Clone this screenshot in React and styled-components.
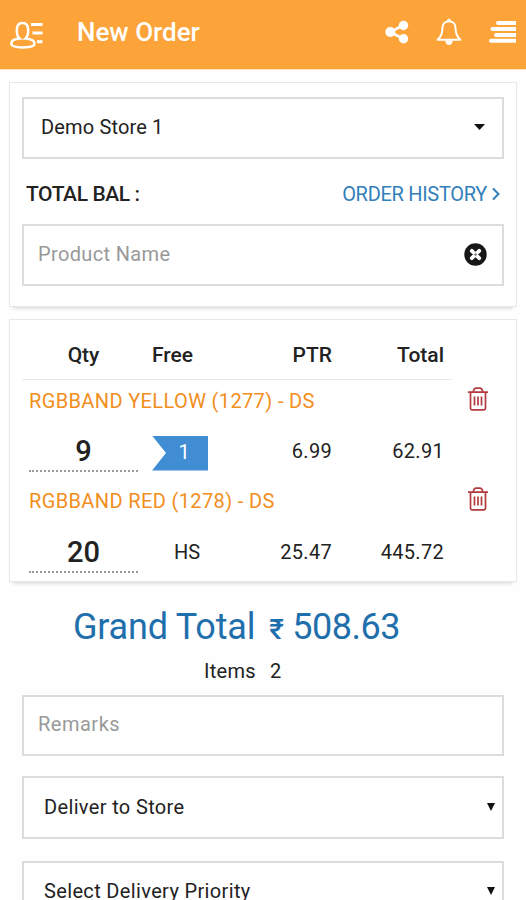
import React from 'react'
import styled, { createGlobalStyle } from 'styled-components'

const GlobalStyle = createGlobalStyle`
  * {
    box-sizing: border-box;
  }

  body {
    margin: 0;
    background: #fefefe;
    color: #222;
    font-family: Roboto, 'Noto Sans', sans-serif;
    font-size: 20px;
  }
`

const Screen = styled.div`
  width: 526px;
  height: 900px;
  overflow: hidden;
`

const Header = styled.header`
  display: flex;
  align-items: center;
  height: 69px;
  padding: 0 10px;
  background: #fca339;
  color: #fff;
  box-shadow: 0 1px 1px #fbe3bd;

  svg {
    display: block;
    flex: none;
  }
`

const Title = styled.h1`
  flex: 1;
  margin: 0 0 5px 34px;
  font-size: 26px;
  line-height: 32px;
  font-weight: 500;
`

const HeaderActions = styled.div`
  display: flex;
  align-items: center;
  gap: 27px;
  margin-bottom: 6px;
`

const Card = styled.section`
  height: ${p => p.$height}px;
  margin: ${p => p.$top}px 9px 0;
  padding: ${p => p.$padding};
  border: 1px solid #e8e8e8;
  background: #fff;
  box-shadow: 0 5px 4px -4px #d2d2d2;
`

const Field = styled.div`
  display: flex;
  align-items: center;
  justify-content: space-between;
  height: ${p => p.$height || 62}px;
  margin-top: ${p => p.$top || 0}px;
  padding: ${p => p.$padding};
  border: 2px solid #dcdcdc;
  background: #fff;
  color: ${p => (p.$placeholder ? '#999' : '#222')};
  letter-spacing: ${p => p.$spacing || 0.35}px;
  line-height: 24px;

  svg {
    display: block;
  }
`

const BalanceRow = styled.div`
  display: flex;
  align-items: center;
  justify-content: space-between;
  height: 65px;
  padding: 4px 4px 0 4px;
`

const Balance = styled.strong`
  font-size: 21px;
  font-weight: 500;
  letter-spacing: -0.4px;
`

const HistoryLink = styled.a`
  display: flex;
  align-items: center;
  gap: 5px;
  color: #337fba;
  letter-spacing: -0.3px;
`

const Row = styled.div`
  display: grid;
  grid-template-columns: 123px 70px 117px 112px;
  align-items: center;
  height: ${p => p.$height}px;
`

const HeadRow = styled(Row)`
  width: 430px;
  border-bottom: 1px solid #e9e9e9;
  font-size: 21px;
  font-weight: 500;
  line-height: 24px;
`

const Cell = styled.span`
  padding-left: ${p => p.$indent || 0}px;
  text-align: ${p => p.$align || 'right'};
  letter-spacing: ${p => p.$spacing || 0}px;
`

const ProductLine = styled.div`
  display: flex;
  align-items: center;
  justify-content: space-between;
  height: 42px;
  padding: 0 16px 0 7px;

  svg {
    margin-bottom: 4px;
  }
`

const ProductName = styled.span`
  color: #f18e1c;
  letter-spacing: 0.37px;
  line-height: 24px;
`

const Qty = styled.div`
  width: 109px;
  height: 42px;
  margin: 0 0 0 7px;
  border-bottom: 2px dotted #999;
  font-size: 29px;
  line-height: 43px;
  font-weight: 500;
  text-align: center;
`

const FreeBadge = styled.span`
  display: block;
  width: 56px;
  height: 35px;
  margin: 4px 0 0 7px;
  padding-left: 8px;
  background: #408dd3;
  clip-path: polygon(0 0, 100% 0, 100% 100%, 0 100%, 25% 50%);
  color: #fff;
  line-height: 33px;
  text-align: center;
`

const GrandTotal = styled.div`
  display: flex;
  align-items: baseline;
  height: 42px;
  margin: 24px 0 0 73px;
  color: #1f6fad;
  font-size: 36px;
  line-height: 42px;
  letter-spacing: -0.2px;
`

const Rupee = styled.span`
  width: 23px;
  margin-left: 14px;
  font-size: 28px;
  font-weight: 500;
`

const Amount = styled.span`
  letter-spacing: -0.5px;
`

const Items = styled.div`
  display: flex;
  gap: 14px;
  margin: 11px 0 12px 204px;
  line-height: 24px;
  letter-spacing: 0.3px;
`

const Form = styled.form`
  display: flex;
  flex-direction: column;
  padding: 0 22px;
`

const UserListIcon = () => (
  <svg width="33" height="28" viewBox="0 0 33 28" fill="none" stroke="currentColor" strokeWidth="2.5">
    <path d="M9.500 17.500C7.200 15.500 6.800 12 6.800 9c0-4.500 2.200-7 5.700-7s5.700 2.500 5.700 7c0 3-.4 6.500-2.700 8.500 6 .5 9 2.600 9 5 0 2.600-5 3.900-12 3.900s-11.200-1.300-11.200-3.900c0-2.400 2.700-4.500 8.200-5z" />
    <path d="M21 3.500h11.500M22.500 12h10" strokeWidth="3" />
    <path d="M27 20.700h5.500" strokeWidth="3" />
  </svg>
)

const ShareIcon = () => (
  <svg width="24" height="24" viewBox="0 0 24 24" fill="currentColor">
    <path d="M19 5L5 12l14 7" fill="none" stroke="currentColor" strokeWidth="2.600" />
    <circle cx="18.500" cy="5.500" r="4.700" />
    <circle cx="5.300" cy="12" r="5" />
    <circle cx="18.500" cy="18.700" r="4.700" />
  </svg>
)

const BellIcon = () => (
  <svg width="26" height="28" viewBox="0 0 26 28" fill="none" stroke="currentColor" strokeWidth="2">
    <path d="M13 3.200c-4.500 0-6.600 3.300-6.600 7.300 0 6-1.600 8.500-4.800 11.300h22.800c-3.200-2.800-4.800-5.300-4.800-11.300 0-4-2.100-7.300-6.600-7.300z" strokeLinejoin="round" />
    <circle cx="13" cy="2.300" r="1.700" fill="currentColor" stroke="none" />
    <path d="M9.300 22.500h7.400c0 2.700-1.500 4.500-3.700 4.500s-3.700-1.800-3.700-4.500z" fill="currentColor" stroke="none" />
  </svg>
)

const MenuIcon = () => (
  <svg width="27" height="24" viewBox="0 0 27 24" fill="currentColor">
    <path d="M9 1h18v4H9a2 2 0 010-4zM3.500 7H27v4H3.500a2 2 0 010-4zM7 13h20v4H7a2 2 0 010-4zM2 18.700h25v4H2a2 2 0 010-4z" />
  </svg>
)

const ClearIcon = () => (
  <svg width="23" height="23" viewBox="0 0 23 23">
    <circle cx="11.500" cy="11.500" r="11.200" fill="#171717" />
    <path d="M7.800 7.800l7.400 7.400M15.200 7.800l-7.400 7.400" stroke="#fff" strokeWidth="3.800" strokeLinecap="round" />
    <circle cx="11.500" cy="11.500" r="1.200" fill="#777" />
  </svg>
)

const TrashIcon = () => (
  <svg width="20" height="24" viewBox="0 0 20 24" fill="none" stroke="#b33a3f" strokeWidth="1.700">
    <path d="M0 5.200h20M5.300 5c.2-2.600 1.500-3.900 3-3.900h3.400c1.500 0 2.800 1.300 3 3.900M2.500 5.500v15.800c0 1 .5 1.500 1.500 1.500h12c1 0 1.500-.5 1.500-1.500V5.500" />
    <path d="M6.500 9.500v9M10 9.500v9M13.500 9.500v9" />
  </svg>
)

const Chevron = () => (
  <svg width="8" height="14" viewBox="0 0 8 14" fill="none" stroke="currentColor" strokeWidth="2">
    <path d="M1 1.500L6.500 7 1 12.500" />
  </svg>
)

const Caret = ({ width = 8, height = 8 }) => (
  <svg width={width} height={height} viewBox="0 0 10 10" preserveAspectRatio="none" fill="#111">
    <path d="M0 0h10L5 10z" />
  </svg>
)

const lines = [
  { name: 'RGBBAND YELLOW (1277) - DS', qty: 9, free: 1, ptr: '6.99', total: '62.91' },
  { name: 'RGBBAND RED (1278) - DS', qty: 20, unit: 'HS', ptr: '25.47', total: '445.72' },
]

const OrderLine = ({ line }) => (
  <>
    <ProductLine>
      <ProductName>{line.name}</ProductName>
      <TrashIcon />
    </ProductLine>
    <Row $height={line.unit ? 59 : 58}>
      <Qty>{line.qty}</Qty>
      {line.free ? <FreeBadge>{line.free}</FreeBadge> : <Cell $align="center" $indent={14}>{line.unit}</Cell>}
      <Cell $spacing={0.3}>{line.ptr}</Cell>
      <Cell $spacing={0.3}>{line.total}</Cell>
    </Row>
  </>
)

export default function App() {
  return (
    <Screen>
      <GlobalStyle />
      <Header>
        <UserListIcon />
        <Title>New Order</Title>
        <HeaderActions>
          <ShareIcon />
          <BellIcon />
          <MenuIcon />
        </HeaderActions>
      </Header>

      <Card $top={13} $height={225} $padding="14px 12px">
        <Field $padding="0 17px 3px" $spacing={0.15}>
          Demo Store 1
          <Caret width={11} height={6} />
        </Field>
        <BalanceRow>
          <Balance>TOTAL BAL :</Balance>
          <HistoryLink>
            ORDER HISTORY
            <Chevron />
          </HistoryLink>
        </BalanceRow>
        <Field $placeholder $padding="0 15px 2px 14px">
          Product Name
          <ClearIcon />
        </Field>
      </Card>

      <Card $top={12} $height={263} $padding="11px 12px">
        <HeadRow $height={49}>
          <Cell $align="center">Qty</Cell>
          <Cell $align="left" $indent={7}>Free</Cell>
          <Cell>PTR</Cell>
          <Cell>Total</Cell>
        </HeadRow>
        {lines.map(line => (
          <OrderLine key={line.name} line={line} />
        ))}
      </Card>

      <GrandTotal>
        Grand Total
        <Rupee>₹</Rupee>
        <Amount>508.63</Amount>
      </GrandTotal>
      <Items>
        <span>Items</span>
        <span>2</span>
      </Items>

      <Form>
        <Field $placeholder $height={61} $padding="0 14px 4px" $spacing={0.5}>Remarks</Field>
        <Field $top={20} $height={63} $padding="0 7px 1px 20px">
          Deliver to Store
          <Caret />
        </Field>
        <Field $top={22} $height={63} $padding="0 7px 3px 20px">
          Select Delivery Priority
          <Caret />
        </Field>
      </Form>
    </Screen>
  )
}
